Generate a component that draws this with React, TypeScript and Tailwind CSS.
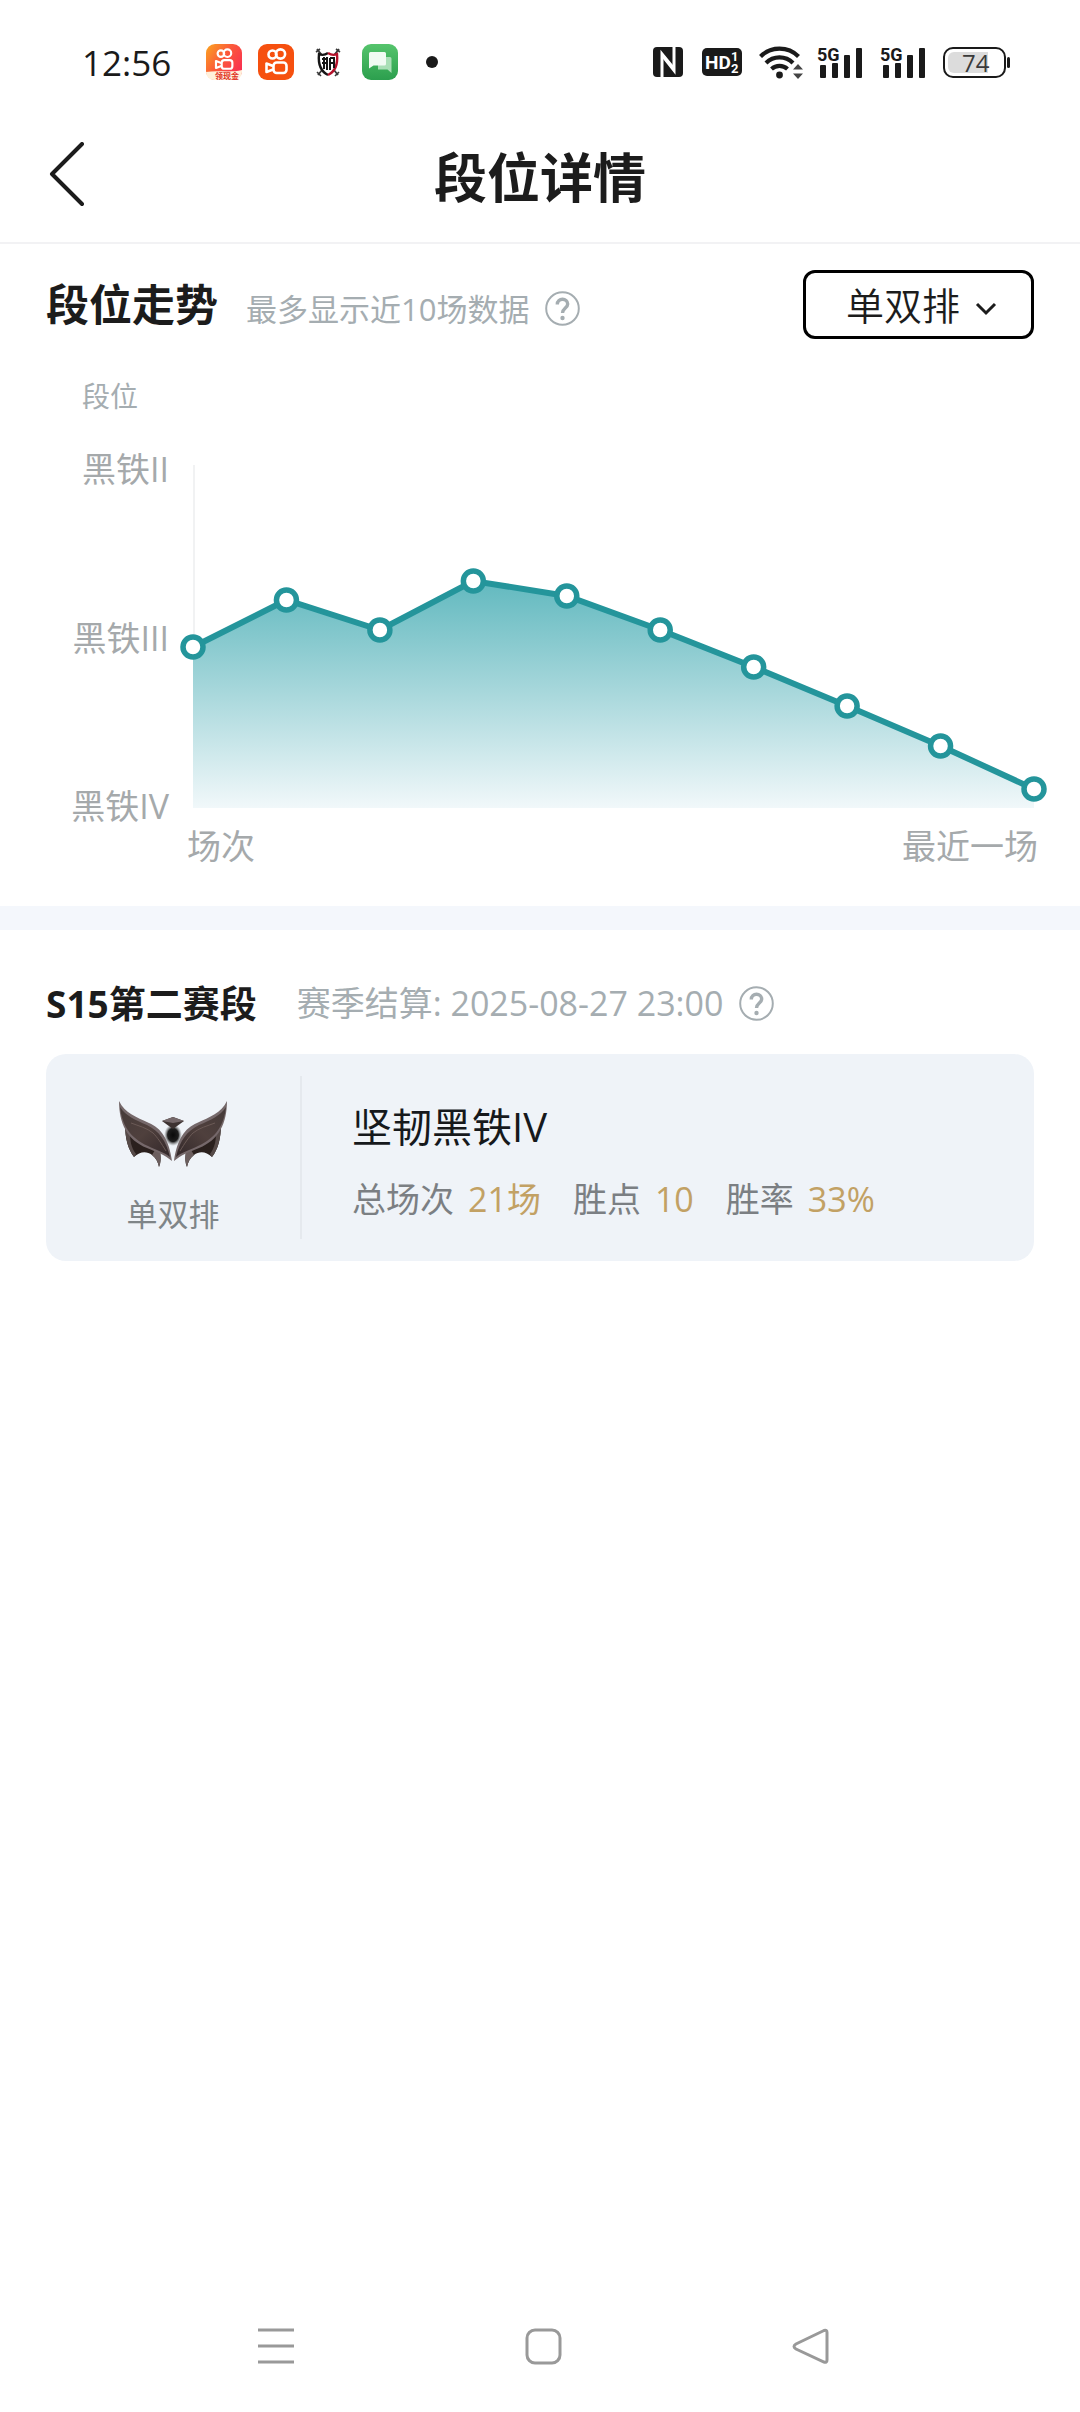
// React
import { useState } from "react";

// Rank value of each match, measured from the bottom of the chart
const MATCHES = [161, 208, 178, 227, 212, 178, 141, 102, 62, 19];
const CHART_WIDTH = 841;
const CHART_HEIGHT = 343;
const RANKS = ["黑铁II", "黑铁III", "黑铁IV"];
const STATS = [
  { label: "总场次", value: "21场" },
  { label: "胜点", value: "10" },
  { label: "胜率", value: "33%" },
];

function CameraGlyph() {
  return (
    <g fill="none" stroke="#fff" strokeWidth="2.6">
      <circle cx="14.5" cy="10.5" r="4" />
      <circle cx="22.5" cy="10" r="4.6" />
      <rect x="15.5" y="18.5" width="13" height="10.5" rx="3.2" />
      <path d="M15 22 L8.5 19.5 V28 L15 25.5" strokeLinejoin="round" />
    </g>
  );
}

function SignalIcon() {
  return (
    <svg width="46" height="34" viewBox="0 0 46 34" fill="#1a1a1a" className="overflow-visible">
      <text x="0" y="16" fontSize="18" fontWeight="700" fontFamily="Roboto">
        5G
      </text>
      <rect x="3" y="20" width="6" height="13" rx="1" />
      <rect x="15" y="18" width="6" height="15" rx="1" />
      <rect x="27" y="10" width="6" height="23" rx="1" />
      <rect x="39" y="3" width="6" height="30" rx="1" />
    </svg>
  );
}

function StatusBar() {
  return (
    <div className="flex h-[124px] items-center justify-between pl-[82px] pr-[70px]">
      <div className="flex items-center gap-4">
        <span className="w-[108px] text-[35px] leading-none text-[#1a1a1a]">
          12:56
        </span>
        <svg width="36" height="36" viewBox="0 0 36 36">
          <defs>
            <linearGradient id="lite" x1="0" y1="0" x2="1" y2="0.7">
              <stop offset="0" stopColor="#fba51f" />
              <stop offset="0.5" stopColor="#fb5a3a" />
              <stop offset="1" stopColor="#f92f52" />
            </linearGradient>
          </defs>
          <rect width="36" height="36" rx="9" fill="url(#lite)" />
          <g transform="translate(3 1) scale(0.82)">
            <CameraGlyph />
          </g>
          <path d="M0 28 C12 26 24 29 36 26 V28 a8 8 0 0 1 -8 8 H8 a8 8 0 0 1 -8 -8z" fill="#fff1dc" />
          <text x="9" y="35" fontSize="8" fontWeight="700" fill="#e0301e" fontFamily="Noto Sans CJK SC">
            领现金
          </text>
        </svg>
        <svg width="36" height="36" viewBox="0 0 36 36">
          <rect width="36" height="36" rx="9" fill="#f6500f" />
          <CameraGlyph />
        </svg>
        <svg width="36" height="36" viewBox="0 0 36 36" fill="none">
          <path d="M7 5 L28 31 M29 5 L8 31" stroke="#3a3a3a" strokeWidth="1.8" />
          <path d="M6 8 L10 5 M26 5 L30 8 M7 28 L11 32 M25 32 L29 28" stroke="#3a3a3a" strokeWidth="1.6" />
          <path d="M18 9 C15 11 11 11 9 10 C8 20 10 27 18 31" fill="#fff" stroke="#161616" strokeWidth="2.4" />
          <path d="M18 9 C21 11 25 11 27 10 C28 20 26 27 18 31" fill="#fff" stroke="#b5122b" strokeWidth="2.4" />
          <path d="M12 15 H17 M12 19 H17 M14 13 V25 M17 13 V26 M20 14 H24 V19 H20 M20 14 V26 M24 19 V24" stroke="#161616" strokeWidth="2" />
        </svg>
        <svg width="36" height="36" viewBox="0 0 36 36">
          <defs>
            <linearGradient id="chat" x1="0" y1="0" x2="0" y2="1">
              <stop offset="0" stopColor="#55c46c" />
              <stop offset="1" stopColor="#2c9f4e" />
            </linearGradient>
          </defs>
          <rect width="36" height="36" rx="9" fill="url(#chat)" />
          <path d="M16 13 H28 a1.5 1.5 0 0 1 1.5 1.5 V29 L25.5 25.5 H16z" fill="#a9dfb6" />
          <path d="M8.5 8 H22.5 a1.5 1.5 0 0 1 1.5 1.5 V20 a1.5 1.5 0 0 1 -1.5 1.5 H11.5 L7 24.5 V9.5 a1.5 1.5 0 0 1 1.5 -1.5z" fill="#f1fbf3" />
        </svg>
        <span className="ml-3 size-3 rounded-full bg-[#1a1a1a]" />
      </div>

      <div className="flex items-center gap-[17px]">
        <svg width="32" height="30" viewBox="0 0 32 30">
          <rect width="30" height="30" rx="4" fill="#1a1a1a" />
          <path d="M9 30 V7 L20 20.5" fill="none" stroke="#fff" strokeWidth="3" />
          <path d="M21 0 V23.5 L10.5 10" fill="none" stroke="#fff" strokeWidth="3" />
        </svg>
        <svg width="40" height="28" viewBox="0 0 40 28" fill="#fff" fontFamily="Roboto" fontWeight="700">
          <rect width="40" height="28" rx="5" fill="#1a1a1a" />
          <text x="3" y="21" fontSize="19">HD</text>
          <text x="29" y="13" fontSize="13">1</text>
          <text x="29" y="25" fontSize="13">2</text>
        </svg>
        <svg width="41" height="34" viewBox="0 0 41 34" fill="none" stroke="#1a1a1a" strokeWidth="4.2" className="overflow-visible">
          <path d="M1.5 11.5 A27 27 0 0 1 39.5 11.5" />
          <path d="M7 18 A19 19 0 0 1 34 18" />
          <path d="M12.5 24 A12 12 0 0 1 28.5 24" />
          <circle cx="20.5" cy="30" r="3.4" fill="#1a1a1a" stroke="none" />
          <path d="M34 24.5 L39 19 L44 24.5z M34 28.5 L39 34 L44 28.5z" fill="#444" stroke="none" />
        </svg>
        <SignalIcon />
        <SignalIcon />
        <div className="flex items-center gap-px">
          <div className="h-[31px] w-[63px] rounded-[10px] border-2 border-[#1a1a1a] p-[3px]">
            <div className="h-full w-10 rounded-l-md bg-[#dcdcdc] pl-[14px] text-[24px] leading-[21px] text-[#3a3a3a]">
              74
            </div>
          </div>
          <div className="h-[11px] w-[3px] rounded-full bg-[#1a1a1a]" />
        </div>
      </div>
    </div>
  );
}

function HelpButton() {
  return (
    <button type="button" aria-label="说明" className="text-[#a5adb1]">
      <svg width="35" height="35" viewBox="0 0 35 35" fill="none" stroke="currentColor">
        <circle cx="17.5" cy="17.5" r="16.3" strokeWidth="2" />
        <path d="M12.3 13.5 C12.3 6.5 22.7 6.8 22.7 13 C22.7 17 17.5 17 17.5 22" strokeWidth="3.4" />
        <circle cx="17.5" cy="27" r="2.2" fill="currentColor" stroke="none" />
      </svg>
    </button>
  );
}

function TrendChart() {
  const step = CHART_WIDTH / (MATCHES.length - 1);
  const points = MATCHES.map((value, i) => [i * step, CHART_HEIGHT - value]);
  const line = points.map(([x, y]) => `${x},${y}`).join(" ");

  return (
    <svg
      viewBox={`0 0 ${CHART_WIDTH} ${CHART_HEIGHT}`}
      className="h-auto w-full overflow-visible"
      role="img"
    >
      <defs>
        <linearGradient id="area" x1="0" y1="0" x2="0" y2="1">
          <stop offset="0" stopColor="#62b9bf" />
          <stop offset="0.5" stopColor="#a9d8dc" />
          <stop offset="1" stopColor="#f1f8fa" />
        </linearGradient>
      </defs>
      <path d={`M1 0 V${CHART_HEIGHT}`} stroke="#f1f2f3" strokeWidth="2" />
      <polygon
        points={`0,${CHART_HEIGHT} ${line} ${CHART_WIDTH},${CHART_HEIGHT}`}
        fill="url(#area)"
      />
      <polyline points={line} fill="none" stroke="#24959b" strokeWidth="6" />
      {points.map(([x, y]) => (
        <circle key={x} cx={x} cy={y} r="10" fill="#fff" stroke="#24959b" strokeWidth="5.5" />
      ))}
    </svg>
  );
}

function IronEmblem() {
  return (
    <svg width="108" height="66" viewBox="0 0 108 66">
      <defs>
        <linearGradient id="wing" x1="0" y1="0" x2="1" y2="1">
          <stop offset="0" stopColor="#453a39" />
          <stop offset="0.5" stopColor="#4f403d" />
          <stop offset="1" stopColor="#33282a" />
        </linearGradient>
        <radialGradient id="gem">
          <stop offset="0" stopColor="#0a0a0a" />
          <stop offset="0.6" stopColor="#1e1e1e" />
          <stop offset="1" stopColor="#8a8a8a" stopOpacity="0" />
        </radialGradient>
        <g id="half">
          <path d="M6 22 C6 38 9 48 15 56 C21 50 28 50 33 54 C37 57 39 61 40 66 C42 61 42 57 41 50 L20 30z" fill="#2a201d" />
          <path d="M6 22 C6 38 9 48 15 56 L17 53 C12 46 11 40 11 31z" fill="#564a48" />
          <path d="M33 54 C37 57 39 61 40 66 C42 61 42 57 41 51 L36 49z" fill="#6b5e5e" />
          <path d="M0 0 C6 12 17 16 30 22 C42 27 50 38 53 60 C46 54 38 51 28 47 C8 39 0 22 0 0z" fill="#75686a" />
          <path d="M1 6 C7 15 16 19 28 24 C40 30 47 39 51 56 C45 51 37 49 29 45 C11 37 3 24 1 6z" fill="url(#wing)" />
          <path d="M12 22 C20 25 28 27 34 32 C39 37 42 42 47 50" fill="none" stroke="#6b5a56" strokeWidth="1" />
        </g>
      </defs>
      <use href="#half" />
      <use href="#half" transform="matrix(-1 0 0 1 108 0)" />
      <ellipse cx="54" cy="34" rx="9" ry="11" fill="url(#gem)" />
      <path d="M43 20 L54 16 L65 20 L54 28z" fill="#3d3231" />
      <path d="M43 20 L54 16 L65 20 L54 22z" fill="#75686a" />
    </svg>
  );
}

export default function App() {
  const [queue, setQueue] = useState("单双排");

  return (
    <div className="flex min-h-screen flex-col bg-white font-['Open_Sans','Noto_Sans_CJK_SC',sans-serif]">
      <StatusBar />

      <header className="grid h-[120px] grid-cols-[1fr_auto_1fr] items-center border-b-2 border-[#f2f2f4] px-12 pb-3">
        <button type="button" aria-label="返回" className="justify-self-start">
          <svg width="38" height="70" viewBox="0 0 38 70" fill="none" stroke="#1c1c1c" strokeWidth="4" strokeLinecap="round" strokeLinejoin="round">
            <path d="M34 2 L4 32 L34 62" />
          </svg>
        </button>
        <h1 className="text-[53px] font-bold leading-none text-[#1c1c1c]">
          段位详情
        </h1>
      </header>

      <main>
        <section className="px-[46px] pb-[43px] pt-[26px]">
          <div className="flex items-center justify-between">
            <div className="flex items-end gap-4">
              <div className="flex items-baseline gap-7">
                <h2 className="text-[43px] font-bold leading-none text-[#1c1c1c]">
                  段位走势
                </h2>
                <p className="text-[31px] leading-none text-[#a5adb1]">
                  最多显示近10场数据
                </p>
              </div>
              <HelpButton />
            </div>
            <div className="relative">
              <select
                aria-label="模式"
                value={queue}
                onChange={(e) => setQueue(e.target.value)}
                className="h-[69px] w-[231px] appearance-none rounded-xl border-3 border-black bg-white pl-10 text-[38px] font-[350] leading-none text-[#1c1c1c]"
              >
                <option>单双排</option>
                <option>灵活排</option>
              </select>
              <svg
                width="22"
                height="14"
                viewBox="0 0 22 14"
                fill="none"
                stroke="#1c1c1c"
                strokeWidth="3"
                className="pointer-events-none absolute right-[37px] top-8"
              >
                <path d="M2 2 L11 11 L20 2" />
              </svg>
            </div>
          </div>

          <p className="mt-[43px] pl-9 text-[28px] leading-none text-[#a5adb1]">
            段位
          </p>
          <div className="mt-[42px] flex gap-6">
            <ul className="flex w-[123px] shrink-0 flex-col justify-between text-right text-[34px] leading-none text-[#a5a9ab]">
              {RANKS.map((rank) => (
                <li key={rank}>{rank}</li>
              ))}
            </ul>
            <div className="flex-1 pb-[15px] pt-[13px]">
              <TrendChart />
            </div>
          </div>
          <div className="-mr-1 mt-[6px] flex justify-between pl-[141px] text-[34px] leading-none text-[#a5a9ab]">
            <span>场次</span>
            <span>最近一场</span>
          </div>
        </section>

        <div className="h-6 bg-[#f4f7fc]" />

        <section className="px-[46px] pt-[50px]">
          <div className="flex h-[46px] items-center">
            <h2 className="text-[37px] font-bold leading-none text-[#1c1c1c]">
              S15第二赛段
            </h2>
            <p className="ml-10 mr-4 text-[34px] leading-none text-[#a5adb1]">
              赛季结算: 2025-08-27 23:00
            </p>
            <HelpButton />
          </div>

          <div className="mt-7 flex rounded-[20px] bg-[#eff3f8]">
            <div className="flex w-[254px] shrink-0 flex-col items-center gap-[31px] pb-[31px] pt-[47px]">
              <IronEmblem />
              <p className="text-[31px] leading-8 text-[#7f8588]">单双排</p>
            </div>
            <div className="my-[22px] flex flex-1 flex-col gap-[34px] border-l-2 border-[#e5e9ee] pl-[50px] pt-[31px]">
              <h3 className="text-[40px] leading-none text-[#16191c]">
                坚韧黑铁IV
              </h3>
              <dl className="flex gap-8 text-[34px] leading-9">
                {STATS.map((stat) => (
                  <div key={stat.label} className="flex gap-[14px]">
                    <dt className="text-[#7b7f83]">{stat.label}</dt>
                    <dd className="text-[#c2a164]">{stat.value}</dd>
                  </div>
                ))}
              </dl>
            </div>
          </div>
        </section>
      </main>

      <nav className="mt-auto flex justify-between pb-[42px] pl-[252px] pr-[246px] text-[#999]">
        <button type="button" aria-label="最近任务">
          <svg width="48" height="48" viewBox="0 0 48 48" stroke="currentColor" strokeWidth="3">
            <path d="M6 8 H42 M6 24 H42 M6 40 H42" />
          </svg>
        </button>
        <button type="button" aria-label="主屏幕">
          <svg width="48" height="48" viewBox="0 0 48 48" fill="none" stroke="currentColor" strokeWidth="3">
            <rect x="8" y="8" width="33" height="33" rx="8" />
          </svg>
        </button>
        <button type="button" aria-label="返回上一级">
          <svg width="48" height="48" viewBox="0 0 48 48" fill="none" stroke="currentColor" strokeWidth="3">
            <path d="M38 8.5 L10 22 Q6 24.5 10 27 L38 40 Q41 41 41 38 V10.5 Q41 7.5 38 8.5z" />
          </svg>
        </button>
      </nav>
    </div>
  );
}
